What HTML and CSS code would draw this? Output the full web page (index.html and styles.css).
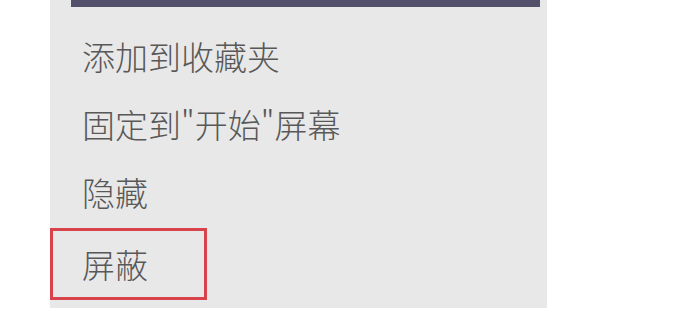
FILE: index.html
```html
<!DOCTYPE html>
<html lang="zh">
<head>
<meta charset="utf-8">
<link rel="stylesheet" href="styles.css">
</head>
<body>
<div class="panel">
  <div class="topbar"></div>
  <ul class="menu">
    <li class="item">添加到收藏夹</li>
    <li class="item">固定到"开始"屏幕</li>
    <li class="item">隐藏</li>
    <li class="item item-marked">屏蔽</li>
  </ul>
</div>
</body>
</html>
```

FILE: styles.css
```css
html, body {
  margin: 0;
  padding: 0;
  background: #ffffff;
}
body {
  width: 679px;
  height: 309px;
  overflow: hidden;
  font-family: "Noto Sans CJK SC", "Noto Sans", sans-serif;
}
.panel {
  margin-left: 50px;
  width: 497px;
  height: 308px;
  background: #e8e8e8;
  display: flex;
  flex-direction: column;
}
.topbar {
  height: 7px;
  margin: 0 7px 0 21px;
  background: #52506a;
}
.menu {
  list-style: none;
  margin: 15px 0 0 0;
  padding: 0;
}
.item {
  height: 68px;
  line-height: 68px;
  padding-left: 32px;
  font-size: 33px;
  font-weight: 300;
  color: #585858;
  white-space: nowrap;
}
.item-marked {
  box-sizing: border-box;
  width: 157px;
  height: 72px;
  margin-top: 2px;
  line-height: 66px;
  padding-left: 29px;
  border: 3px solid #d8424b;
}
```
